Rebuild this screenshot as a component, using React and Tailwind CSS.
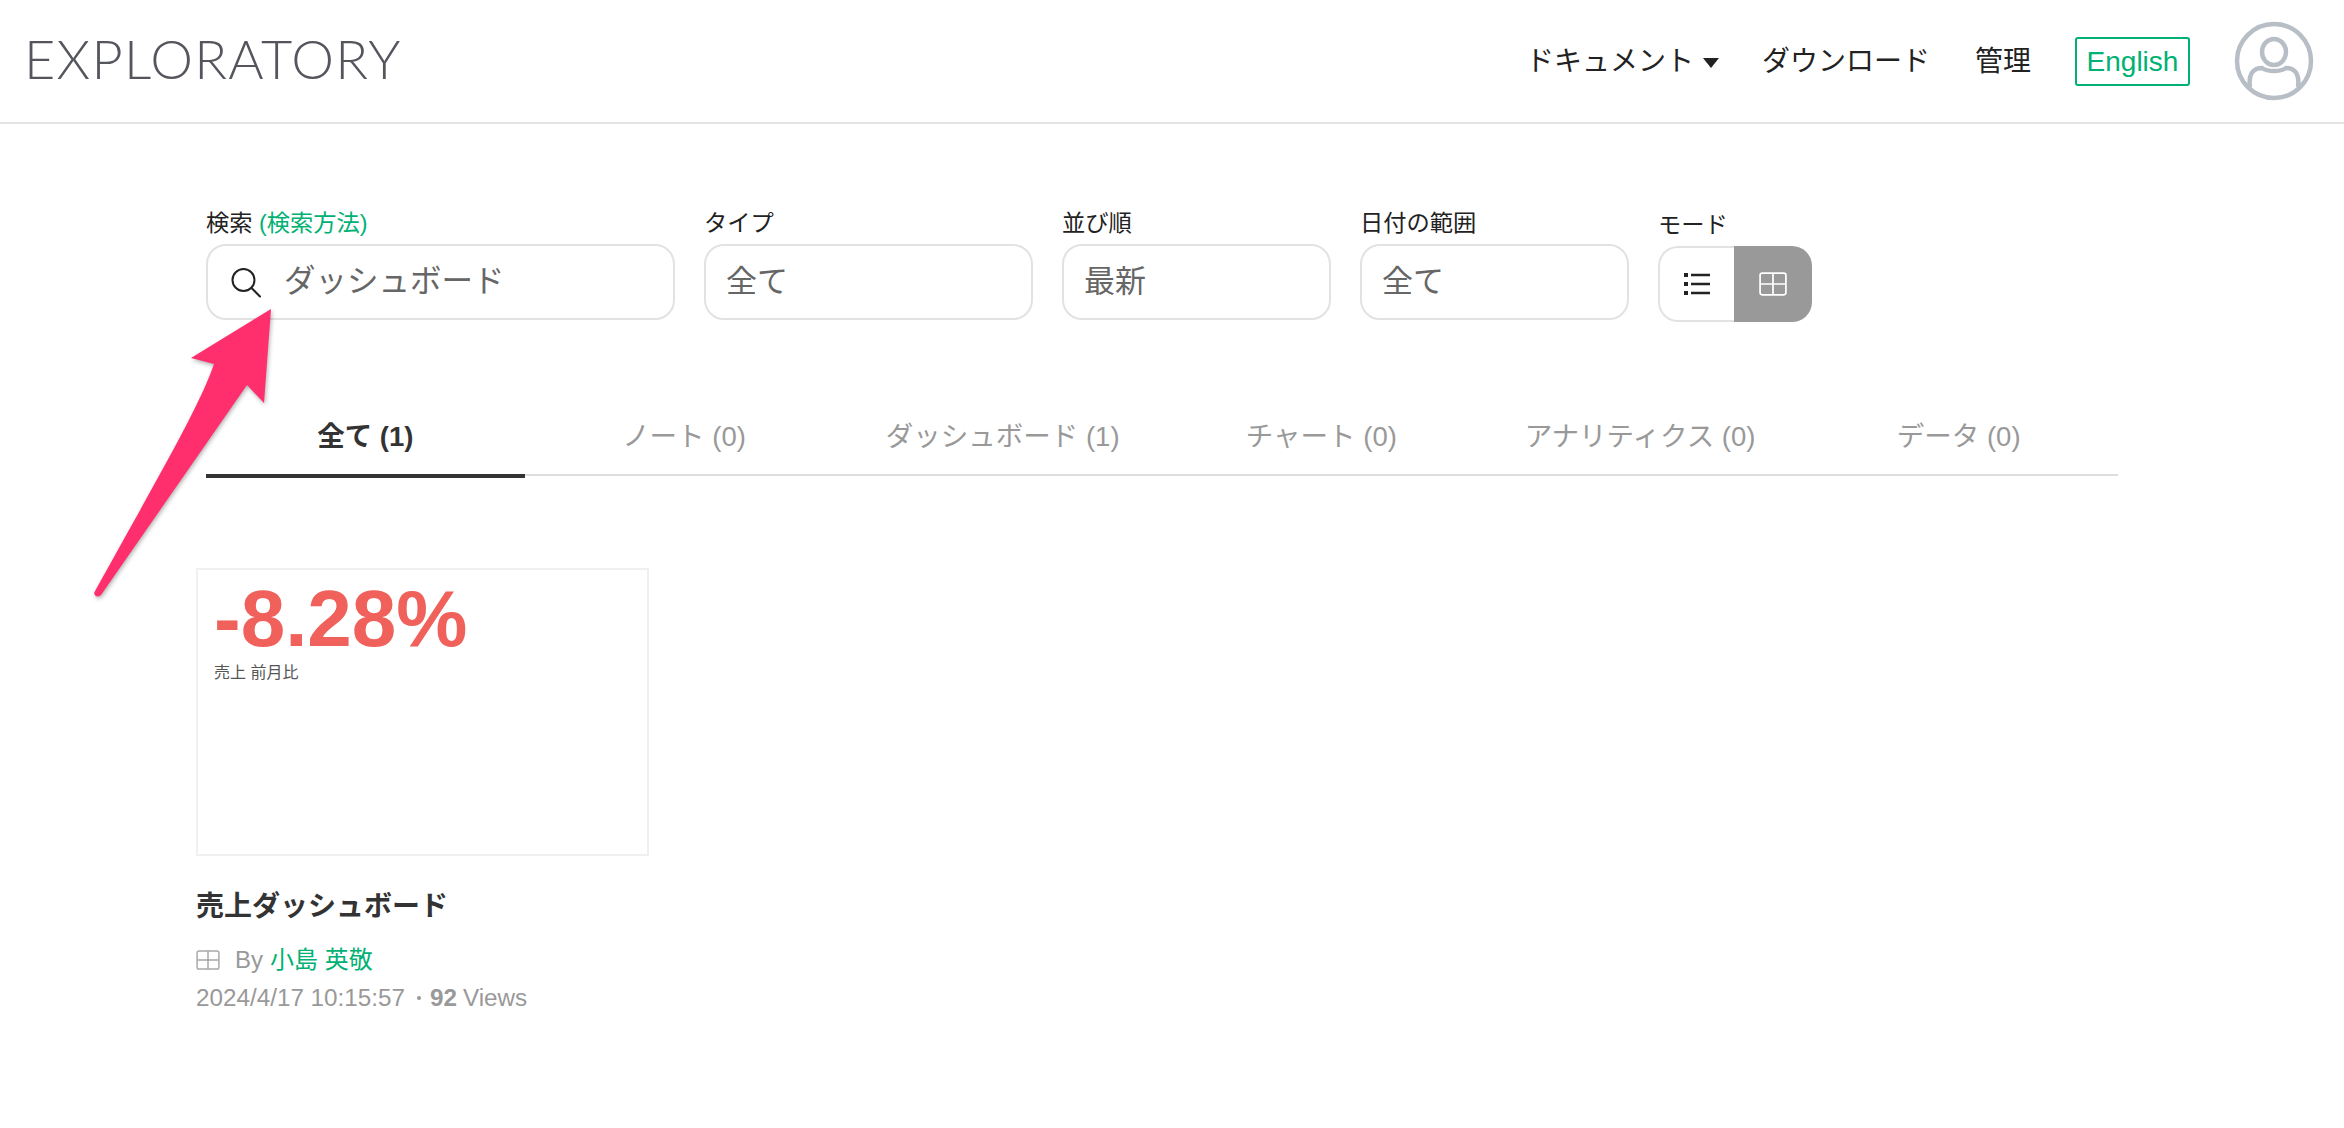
function SearchIcon() {
  return (
    <svg width="32" height="32" viewBox="0 0 32 32" fill="none" stroke="#222" strokeWidth="2" strokeLinecap="round">
      <circle cx="13.5" cy="14" r="11" />
      <path d="M21.5 22 L30 30.5" />
    </svg>
  );
}

function GridIcon({ color, size = 26, height = 22 }) {
  return (
    <svg width={size} height={height} viewBox="0 0 26 22" fill="none" stroke={color} strokeWidth="1.6">
      <rect x="1" y="1" width="24" height="20" rx="2" />
      <path d="M13 1V21M1 11H25" />
    </svg>
  );
}

function ListIcon() {
  return (
    <svg width="26" height="24" viewBox="0 0 26 24" fill="none" stroke="#222" strokeWidth="2.4">
      <path d="M7 3H26M7 12H26M7 21H26" />
      <path d="M0 3H4M0 12H4M0 21H4" strokeWidth="4" />
    </svg>
  );
}

function Avatar() {
  return (
    <svg width="80" height="80" viewBox="0 0 80 80" fill="none" stroke="#b8bec5" strokeWidth="4.5">
      <circle cx="40" cy="40" r="37" />
      <ellipse cx="40" cy="31" rx="12" ry="13" />
      <path d="M16 66 C14 52 20 47 28 47 C34 51 46 51 52 47 C60 47 66 52 64 66" />
    </svg>
  );
}

function PinkArrow() {
  return (
    <svg
      className="absolute left-0 top-0 drop-shadow-[1px_2px_2px_rgba(0,0,0,0.3)]"
      width="300"
      height="620"
      viewBox="0 0 300 620"
    >
      <path
        d="M271 309 L264 403 L247 385 L101 595 Q96 599 94 593 C165 465 200 405 214 364 L191 358 Z"
        fill="#ff2e6c"
      />
    </svg>
  );
}

function Field({ label, value, className }) {
  return (
    <div className={className}>
      <div className="h-[37px] text-[23.25px] leading-[32px] text-[#222]">{label}</div>
      <div className="flex h-[76px] items-center rounded-[20px] border-2 border-[#e2e2e2] pl-[20px] text-[31px] text-[#666]">
        {value}
      </div>
    </div>
  );
}

const tabs = ["全て (1)", "ノート (0)", "ダッシュボード (1)", "チャート (0)", "アナリティクス (0)", "データ (0)"];

export default function App() {
  return (
    <div className="relative min-h-[1128px] bg-white font-['Liberation_Sans','Noto_Sans_CJK_JP',sans-serif]">
      <header className="flex h-[124px] items-center justify-between border-b-2 border-[#e4e4e4] pl-[24px] pr-[30px]">
        <div className="-mt-[5px] font-['Lato',sans-serif] text-[54px] font-light leading-none tracking-[1.25px] text-[#55565d]">
          EXPLORATORY
        </div>
        <nav className="flex items-center text-[28px] text-[#222]">
          <div className="mt-[2px] flex items-center gap-[9px]">
            ドキュメント
            <span className="mt-[2px] h-0 w-0 border-x-[8px] border-t-[10px] border-x-transparent border-t-[#222]" />
          </div>
          <div className="ml-[43px] mt-[2px]">ダウンロード</div>
          <div className="ml-[45px] mt-[2px]">管理</div>
          <div className="ml-[44px] flex h-[49px] w-[115px] items-center justify-center rounded-[3px] border-2 border-[#00b173] pt-[2px] text-[#00b173]">
            English
          </div>
          <div className="ml-[44px]">
            <Avatar />
          </div>
        </nav>
      </header>

      <main className="px-[206px] pr-[226px] pt-[83px]">
        <div className="flex items-start gap-[29px]">
          <div className="w-[469px]">
            <div className="h-[37px] text-[23.25px] leading-[32px] text-[#222]">
              検索 <span className="text-[#00b173]">(検索方法)</span>
            </div>
            <div className="flex h-[76px] items-center rounded-[20px] border-2 border-[#e2e2e2] pl-[22px] text-[31.5px] text-[#666]">
              <SearchIcon />
              <span className="ml-[22px]">ダッシュボード</span>
            </div>
          </div>
          <Field label="タイプ" value="全て" className="w-[329px]" />
          <Field label="並び順" value="最新" className="w-[269px]" />
          <Field label="日付の範囲" value="全て" className="w-[269px]" />
          <div className="w-[154px]">
            <div className="h-[39px] pt-[2px] text-[23.25px] leading-[32px] text-[#222]">モード</div>
            <div className="flex h-[76px]">
              <div className="flex w-[76px] items-center justify-center rounded-l-[20px] border-2 border-r-0 border-[#e2e2e2]">
                <ListIcon />
              </div>
              <div className="flex w-[78px] items-center justify-center rounded-r-[20px] bg-[#999999]">
                <GridIcon color="#ffffff" size={28} height={24} />
              </div>
            </div>
          </div>
        </div>

        <div className="mt-[74px] flex items-start border-b-2 border-[#dddddd]">
          {tabs.map((t, i) => (
            <div
              key={t}
              className={
                i === 0
                  ? "-mb-[4px] flex h-[82px] flex-1 items-center justify-center border-b-4 border-[#333333] pt-[4px] text-[27.5px] font-bold text-[#333333]"
                  : "-mb-[4px] flex h-[82px] flex-1 items-center justify-center text-[27.5px] text-[#999999]"
              }
            >
              {t}
            </div>
          ))}
        </div>

        <section className="-ml-[10px] mt-[92px] w-[453px]">
          <div className="h-[288px] border-2 border-[#f0f0f0] pl-[16px] pt-[5px]">
            <div className="text-[80px] font-bold leading-[88px] text-[#ef615a]">-8.28%</div>
            <div className="text-[16px] leading-[20px] text-[#555555]">売上 前月比</div>
          </div>
          <div className="mt-[31px] text-[28px] font-bold leading-[40px] text-[#333333]">売上ダッシュボード</div>
          <div className="mt-[18px] flex h-[30px] items-center text-[24px] text-[#999999]">
            <GridIcon color="#a8a8a8" size={24} height={20} />
            <span className="ml-[15px]">By</span>
            <span className="ml-[7px] text-[#00b173]">小島 英敬</span>
          </div>
          <div className="mt-[7px] flex h-[32px] items-center text-[24.25px] text-[#999999]">
            2024/4/17 10:15:57
            <span className="ml-[12px] mr-[9px] h-[4px] w-[4px] rounded-full bg-[#999999]" />
            <b>92</b>
            <span className="ml-[6px]">Views</span>
          </div>
        </section>
      </main>

      <PinkArrow />
    </div>
  );
}
